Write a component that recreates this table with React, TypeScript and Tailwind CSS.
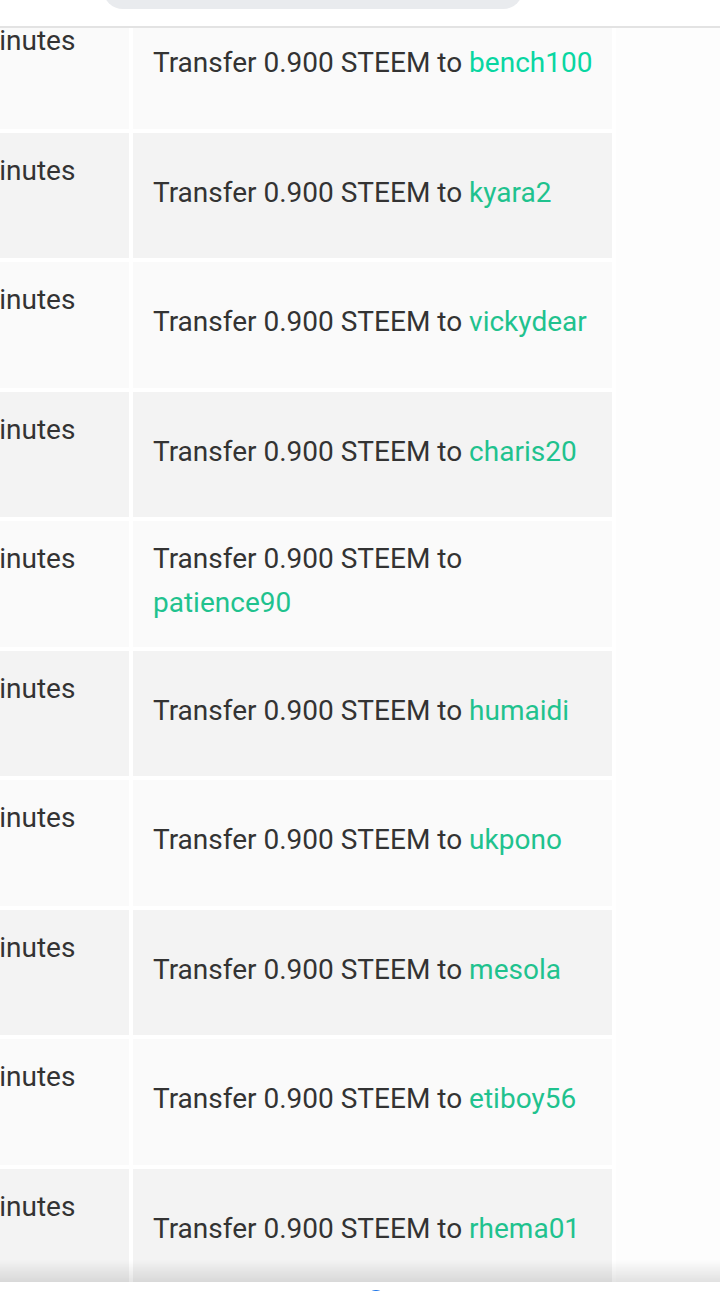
import React from "react";

const transfers = [
  "bench100",
  "kyara2",
  "vickydear",
  "charis20",
  "patience90",
  "humaidi",
  "ukpono",
  "mesola",
  "etiboy56",
  "rhema01",
];

export default function App() {
  return (
    <div
      className="relative min-h-screen overflow-hidden bg-[#fdfdfd] text-[28px] leading-[44px] text-[#333333]"
      style={{ fontFamily: "Roboto, 'Liberation Sans', sans-serif" }}
    >
      {/* top bar with search pill */}
      <div className="fixed left-0 right-0 top-0 z-10 h-[28px] border-b-2 border-[#e3e3e3] bg-white">
        <div className="absolute left-[103px] top-[-31px] h-[40px] w-[420px] rounded-full bg-[#e9ebee]" />
      </div>

      <table className="ml-[-72px] mt-[-1px] border-separate border-spacing-[4px] bg-white">
        <tbody>
          {transfers.map((user, i) => {
            const bg = i % 2 === 0 ? "bg-[#fafafa]" : "bg-[#f3f3f3]";
            return (
              <tr key={user}>
                <td className={`w-[197px] pl-5 pt-[16px] pb-[21.5px] align-middle ${bg}`}>
                  <div className="w-[140px]">4 minutes ago</div>
                </td>
                <td className={`w-[479px] pl-5 pr-3 pt-[16px] pb-[21.5px] align-middle ${bg}`}>
                  Transfer 0.900 STEEM to{" "}
                  <a className={i === 0 ? "text-[#08d6a1]" : "text-[#1fc28e]"}>{user}</a>
                </td>
              </tr>
            );
          })}
        </tbody>
      </table>

      {/* bottom bar with refresh indicator */}
      <div className="fixed bottom-0 left-0 right-0 z-10">
        <div className="h-[22px] bg-gradient-to-b from-transparent to-[rgba(0,0,0,0.11)]" />
        <div className="relative h-[9px] bg-white">
          <svg className="absolute left-[366px] top-[6px]" width="20" height="20" viewBox="0 0 20 20">
            <path d="M4 6 A8 8 0 0 1 16 6" fill="none" stroke="#1a73e8" strokeWidth="2.5" strokeLinecap="round" />
          </svg>
        </div>
      </div>
    </div>
  );
}
